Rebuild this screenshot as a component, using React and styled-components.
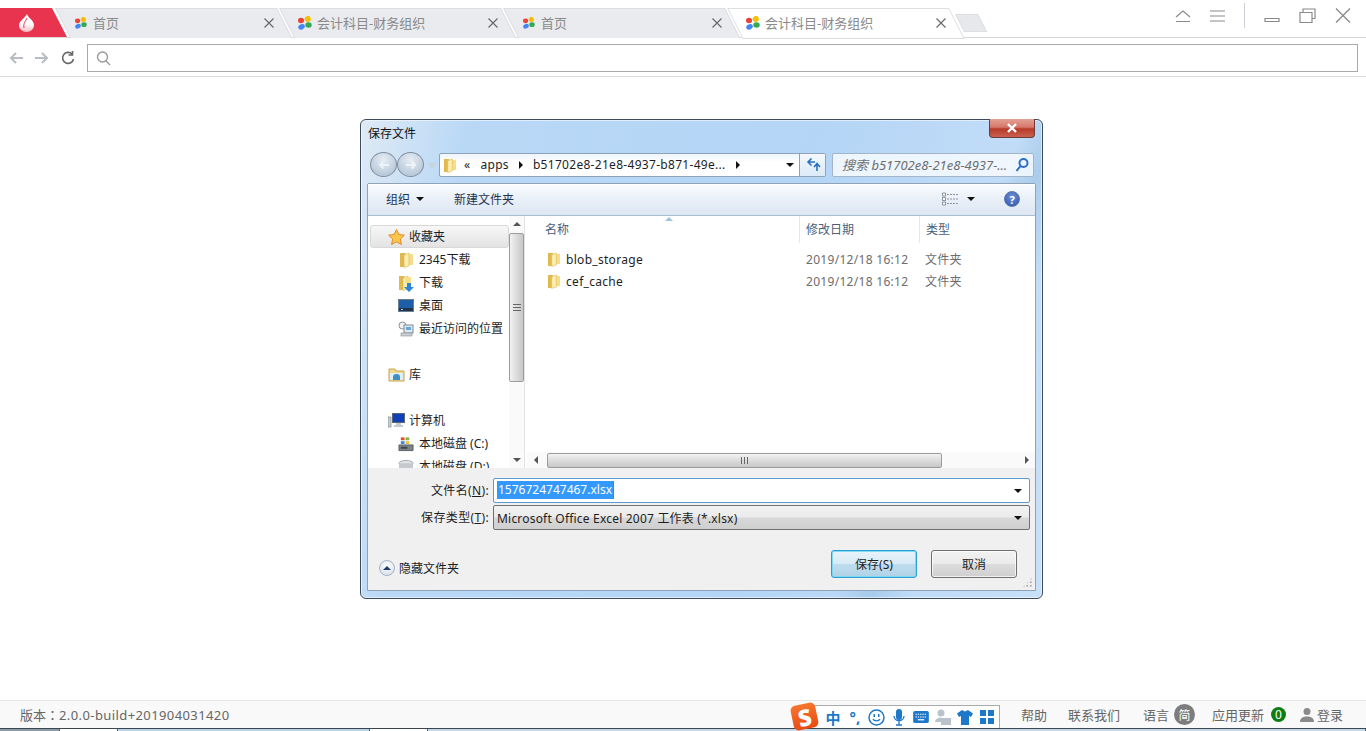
import React from 'react';
import styled, { createGlobalStyle } from 'styled-components';

const GlobalStyle = createGlobalStyle`
  html, body {
    margin: 0;
    height: 100%;
    background: #fff;
    overflow: hidden;
    font-family: "Noto Sans", "Noto Sans CJK SC", sans-serif;
  }
  * { box-sizing: border-box; }
`;

const Page = styled.div`
  display: flex;
  flex-direction: column;
  width: 1366px;
  height: 731px;
`;

/* browser chrome */
const TabBar = styled.div`
  display: flex;
  align-items: flex-start;
  height: 38px;
  padding-top: 8px;
  border-bottom: 1px solid #d8d8d8;
`;

const Brand = styled.div`
  display: flex;
  align-items: center;
  justify-content: center;
  width: 67px;
  height: 29px;
  margin-right: -12px;
  padding-right: 15px;
  background: #e8344e;
  clip-path: polygon(0 0, 52px 0, 67px 100%, 0 100%);
`;

const Tab = styled.div`
  position: relative;
  display: flex;
  align-items: center;
  width: 224px;
  height: 29px;
  padding: 0 5px 0 19px;
  font-size: 13px;
  color: #8a8a8a;

  &::before {
    content: '';
    position: absolute;
    top: 0;
    left: 0;
    width: 220px;
    height: 29px;
    transform-origin: 0 0;
    transform: skewX(27deg);
    background: ${p => (p.$active ? '#fff' : '#e9ebef')};
    border: 1px solid #dcdee2;
    border-bottom: ${p => (p.$active ? '1px solid #dcdee2' : 'none')};
  }

  & > * {
    position: relative;
  }
`;

const FavSlot = styled.span`
  display: flex;
  align-items: center;
  justify-content: center;
  width: 14px;
`;

const TabTitle = styled.span`
  margin-left: 5px;
  flex: 1;
`;

const NewTab = styled.div`
  width: 23px;
  height: 18px;
  margin: 6px 0 0 4px;
  background: #e6e8ec;
  border: 1px solid #dcdee2;
  transform-origin: 0 0;
  transform: skewX(27deg);
`;

const WindowControls = styled.div`
  display: flex;
  align-items: center;
  gap: 19px;
  height: 25px;
  margin: -5px 0 0 auto;
  padding-right: 15px;
`;

const ControlDivider = styled.div`
  width: 1px;
  height: 25px;
  background: #ccd0d4;
`;

const AddressBar = styled.div`
  display: flex;
  align-items: center;
  height: 39px;
  padding: 2px 8px 0 9px;
  border-bottom: 1px solid #dcdcdc;
`;

const NavIcons = styled.div`
  display: flex;
  align-items: center;
  gap: 12px;
  width: 78px;
`;

const UrlInput = styled.div`
  display: flex;
  align-items: center;
  flex: 1;
  height: 28px;
  padding-left: 8px;
  border: 1px solid #aaa;
`;

const Main = styled.div`
  flex: 1;
  padding: 42px 0 0 360px;
`;

/* save dialog */
const Dialog = styled.div`
  display: flex;
  flex-direction: column;
  width: 683px;
  height: 480px;
  border: 1px solid #3b4a5c;
  border-radius: 6px;
  box-shadow: inset 0 0 0 1px rgba(255, 255, 255, 0.55);
  background:
    linear-gradient(112deg, rgba(255,255,255,0) 76%, rgba(150,190,225,0.55) 80%, rgba(255,255,255,0) 85%),
    linear-gradient(100deg, #dfeaf5 0%, #b9d8f6 14%, #b4d5f6 60%, #c8e0f8 100%);
  font-size: 12px;
  color: #1e1e1e;
`;

const TitleRow = styled.div`
  display: flex;
  justify-content: space-between;
  height: 32px;
  padding: 0 7px;
`;

const TitleText = styled.div`
  margin-top: 6px;
  line-height: 16px;
  color: #111;
`;

const CloseButton = styled.div`
  display: flex;
  align-items: center;
  justify-content: center;
  width: 46px;
  height: 19px;
  margin-top: -1px;
  border: 1px solid #6f3a3a;
  border-top: none;
  border-radius: 0 0 4px 4px;
  background: linear-gradient(#e2a195 0%, #d6786a 45%, #b83a2a 55%, #c9604e 100%);
`;

const NavRow = styled.div`
  display: flex;
  align-items: center;
  height: 25px;
  padding: 0 8px 0 9px;
`;

const RoundButton = styled.div`
  display: flex;
  align-items: center;
  justify-content: center;
  width: 27px;
  height: 25px;
  border: 1px solid #7f8fa0;
  border-radius: 50%;
  background: radial-gradient(circle at 50% 30%, #e6edf4 0%, #bccbdb 70%, #a9b9c9 100%);
`;

const SmallCaret = styled.div`
  width: 0;
  height: 0;
  margin: 2px 2px 0 3px;
  border-left: 5px solid transparent;
  border-right: 5px solid transparent;
  border-top: 6px solid #c8d4df;
`;

const Breadcrumb = styled.div`
  display: flex;
  align-items: center;
  width: 387px;
  height: 24px;
  padding-left: 3px;
  border: 1px solid #8fa3b6;
  border-radius: 2px;
  background: linear-gradient(#eef5fc, #fff 40%);
`;

const Crumbs = styled.div`
  display: flex;
  align-items: center;
  flex: 1;
  gap: 10px;
  padding-left: 7px;
  letter-spacing: 0.3px;
`;

const CrumbArrow = styled.i`
  width: 0;
  height: 0;
  border-top: 4px solid transparent;
  border-bottom: 4px solid transparent;
  border-left: 4px solid #111;
`;

const RefreshCell = styled.div`
  display: flex;
  align-items: center;
  justify-content: center;
  width: 26px;
  height: 100%;
  margin-left: 5px;
  border-left: 1px solid #8fa3b6;
  background: linear-gradient(#f4f8fd, #dceafa);
`;

const SearchBox = styled.div`
  display: flex;
  align-items: center;
  justify-content: space-between;
  width: 202px;
  height: 24px;
  margin-left: auto;
  padding: 0 4px 0 9px;
  border: 1px solid #a3b5c6;
  border-radius: 2px;
  background: rgba(255, 255, 255, 0.75);
  font-size: 13px;
  font-style: italic;
  color: #6f6f6f;
  white-space: nowrap;
`;

const Content = styled.div`
  position: relative;
  display: flex;
  flex-direction: column;
  width: 669px;
  height: 408px;
  margin: 6px 0 0 6px;
  border: 1px solid #8ea3b8;
  border-radius: 2px 2px 0 0;
  background: #fff;
`;

const Toolbar = styled.div`
  display: flex;
  align-items: center;
  height: 32px;
  flex-shrink: 0;
  padding: 0 15px 2px 18px;
  border-top: 1px solid #fff;
  border-bottom: 1px solid #a9bdd2;
  background: linear-gradient(#f8fbfe, #e8eff7 50%, #dde7f2);
  color: #1c3553;
`;

const ToolItem = styled.div`
  display: flex;
  align-items: center;
  gap: 6px;
  margin-right: ${p => p.$gap || 0}px;
`;

const ToolRight = styled.div`
  display: flex;
  align-items: center;
  margin-left: auto;
`;

const HelpIcon = styled.div`
  display: flex;
  align-items: center;
  justify-content: center;
  width: 16px;
  height: 16px;
  margin-left: 29px;
  border-radius: 50%;
  border: 1px solid #5a78ad;
  background: radial-gradient(circle at 50% 35%, #6f93d6, #2b50a8);
  color: #fff;
  font-size: 11px;
  font-weight: 700;
`;

const Panes = styled.div`
  display: flex;
  height: 252px;
  flex-shrink: 0;
`;

const NavPane = styled.div`
  width: 141px;
  height: 100%;
  padding: 9px 0 0 2px;
  overflow: hidden;
  flex-shrink: 0;
`;

const NavItem = styled.div`
  display: flex;
  align-items: center;
  gap: ${p => (p.$sub ? 5 : 4)}px;
  height: 23px;
  margin-top: ${p => p.$top || 0}px;
  padding-left: ${p => (p.$sub ? 28 : 18)}px;
  white-space: nowrap;
  color: #1e1e1e;
  ${p =>
    p.$head &&
    `
    border: 1px solid #d8d8d8;
    border-radius: 3px;
    padding-left: 17px;
    background: linear-gradient(#f7f7f7, #e3e3e3);
  `}
`;

const IconSlot = styled.span`
  display: flex;
  align-items: center;
  justify-content: center;
  width: ${p => (p.$sub ? 16 : 17)}px;
  flex-shrink: 0;
`;

const NavLabel = styled.span`
  padding-bottom: 2px;
`;

const VScroll = styled.div`
  display: flex;
  flex-direction: column;
  justify-content: space-between;
  width: 16px;
  height: 100%;
  flex-shrink: 0;
  background: #fafafa;
  border-right: 1px solid #e3e3e3;
`;

const ScrollCell = styled.div`
  display: flex;
  align-items: center;
  justify-content: center;
  flex-shrink: 0;
  width: ${p => p.$w || 15}px;
  height: 16px;
`;

const VThumb = styled.div`
  display: flex;
  align-items: center;
  justify-content: center;
  width: 15px;
  height: 149px;
  margin: 1px 0 auto;
  border: 1px solid #9c9c9c;
  border-radius: 2px;
  background: linear-gradient(90deg, #f2f2f2, #dcdcdc 50%, #c8c8c8);
`;

const ArrowGlyph = styled.i`
  width: 0;
  height: 0;
  ${p => {
    const c = '#555';
    if (p.$dir === 'up') return `border-left:4px solid transparent;border-right:4px solid transparent;border-bottom:4px solid ${c};`;
    if (p.$dir === 'down') return `border-left:4px solid transparent;border-right:4px solid transparent;border-top:4px solid ${c};`;
    if (p.$dir === 'left') return `border-top:4px solid transparent;border-bottom:4px solid transparent;border-right:4px solid ${c};`;
    return `border-top:4px solid transparent;border-bottom:4px solid transparent;border-left:4px solid ${c};`;
  }}
`;

const Grip = styled.div`
  width: ${p => (p.$h ? '7px' : '8px')};
  height: 7px;
  background: ${p =>
    p.$h
      ? 'repeating-linear-gradient(90deg, #666 0 1px, transparent 1px 3px)'
      : 'repeating-linear-gradient(#666 0 1px, transparent 1px 3px)'};
`;

const ListPane = styled.div`
  display: flex;
  flex-direction: column;
  flex: 1;
  min-width: 0;
  margin-left: 2px;
`;

const ListHeader = styled.div`
  position: relative;
  display: flex;
  height: 27px;
  flex-shrink: 0;
  color: #4c607a;
`;

const SortArrow = styled.i`
  position: absolute;
  top: 1px;
  left: 138px;
  width: 0;
  height: 0;
  border-left: 4px solid transparent;
  border-right: 4px solid transparent;
  border-bottom: 4px solid #9cc3dd;
`;

const HeaderCell = styled.div`
  display: flex;
  align-items: center;
  width: ${p => p.$w}px;
  height: 100%;
  padding: 0 0 2px ${p => p.$pad}px;
  border-right: ${p => (p.$last ? 'none' : '1px solid #e3e8ee')};
`;

const Rows = styled.div`
  flex: 1;
  padding-top: 5px;
  letter-spacing: 0.3px;
`;

const FileRow = styled.div`
  display: flex;
  align-items: center;
  height: 22px;
`;

const NameCell = styled.div`
  display: flex;
  align-items: center;
  gap: 5px;
  width: 279px;
  padding-left: 20px;
`;

const MetaCell = styled.div`
  width: ${p => p.$w}px;
  color: #6d6d6d;
`;

const HScroll = styled.div`
  display: flex;
  align-items: center;
  height: 16px;
  flex-shrink: 0;
  background: #fafafa;
`;

const HThumb = styled.div`
  display: flex;
  align-items: center;
  justify-content: center;
  width: 395px;
  height: 15px;
  margin: 0 auto 0 2px;
  border: 1px solid #9c9c9c;
  border-radius: 2px;
  background: linear-gradient(#f2f2f2, #dcdcdc 50%, #c8c8c8);
`;

const FormPanel = styled.div`
  flex: 1;
  padding: 10px 5px 0 0;
  background: #f0f0f0;
`;

const FormRow = styled.div`
  display: flex;
  align-items: center;
  height: 25px;
  margin-bottom: 2px;
`;

const FieldLabel = styled.label`
  width: 125px;
  padding: 0 4px 2px 0;
  text-align: right;
  white-space: nowrap;
  letter-spacing: 0.35px;
`;

const FileInput = styled.div`
  display: flex;
  align-items: center;
  justify-content: space-between;
  width: 537px;
  height: 25px;
  padding: 0 7px 0 3px;
  border: 1px solid ${p => (p.$combo ? '#707070' : '#5b9bd0')};
  border-radius: 2px;
  background: ${p => (p.$combo ? 'linear-gradient(#f2f2f2, #ebebeb 48%, #d8d8d8 52%, #cfcfcf)' : '#fff')};
  letter-spacing: ${p => (p.$combo ? '0.2px' : '0')};
  white-space: nowrap;
`;

const Selected = styled.span`
  margin-bottom: 1px;
  padding: 0 1px;
  background: #3399ff;
  border-right: 1px solid #c86414;
  color: #fff;
  line-height: 18px;
`;

const BlackCaret = styled.i`
  width: 0;
  height: 0;
  margin-left: ${p => p.$left || 0}px;
  margin-right: ${p => p.$right || 0}px;
  border-left: 4px solid transparent;
  border-right: 4px solid transparent;
  border-top: 4px solid #111;
`;

const ActionRow = styled.div`
  display: flex;
  align-items: center;
  margin-top: 20px;
  padding: 0 13px 0 11px;
`;

const HideToggle = styled.div`
  display: flex;
  align-items: center;
  gap: 4px;
  margin-right: auto;
  padding-top: 8px;
`;

const ToggleCircle = styled.div`
  display: flex;
  align-items: center;
  justify-content: center;
  width: 16px;
  height: 16px;
  border: 1px solid #a5b4c5;
  border-radius: 50%;
  background: radial-gradient(circle at 50% 35%, #fff, #d0dbe7);
`;

const ToggleCaret = styled.i`
  width: 0;
  height: 0;
  border-left: 4px solid transparent;
  border-right: 4px solid transparent;
  border-bottom: 4px solid #1e3b72;
`;

const DialogButton = styled.div`
  display: flex;
  align-items: center;
  justify-content: center;
  width: 86px;
  height: 28px;
  margin-left: ${p => (p.$second ? 14 : 0)}px;
  border: 1px solid ${p => (p.$primary ? '#2a9fd0' : '#707070')};
  border-radius: 3px;
  box-shadow: inset 0 0 0 1px ${p => (p.$primary ? 'rgba(120, 215, 245, 0.9)' : 'rgba(255, 255, 255, 0.7)')};
  background: ${p =>
    p.$primary
      ? 'linear-gradient(#e8f3fa, #d8ebf6 48%, #bedcee 52%, #b0d2e6)'
      : 'linear-gradient(#f2f2f2, #ebebeb 48%, #dcdcdc 52%, #cfcfcf)'};
`;

const ResizeDots = styled.div`
  position: absolute;
  right: 2px;
  bottom: 2px;
  width: 11px;
  height: 11px;
  background: radial-gradient(circle, #a8a8a8 0.7px, transparent 1px) 0 0 / 3.5px 3.5px;
  clip-path: polygon(100% 0, 100% 100%, 0 100%);
`;

/* status bar */
const StatusBar = styled.div`
  display: flex;
  align-items: center;
  height: 28px;
  padding: 0 23px 0 20px;
  border-top: 1px solid #e6e6e6;
  background: #f9f9f9;
  font-size: 13px;
  color: #666;
`;

const VersionNumber = styled.span`
  letter-spacing: 0.4px;
`;

const VersionColon = styled.span`
  font-family: "Noto Sans CJK TC", sans-serif;
`;

const ImeBar = styled.div`
  display: flex;
  align-items: center;
  gap: 4px;
  height: 24px;
  margin: 4px 21px 0 auto;
  padding: 0 3px 0 0;
  background: #fff;
  border: 1px solid #aaa;
  border-left: none;
  border-bottom: none;
`;

const ImeLogo = styled.span`
  display: flex;
  align-items: center;
  justify-content: center;
  width: 25px;
  height: 25px;
  margin: -2px 3px 0 -6px;
  border-radius: 5px;
  background: linear-gradient(#f5762f, #ea4a12);
  color: #fff;
  font-size: 23px;
  font-weight: 900;
  transform: rotate(-12deg);
`;

const ImeCell = styled.span`
  display: flex;
  align-items: center;
  justify-content: center;
  width: 18px;
  color: #1d78c9;
  font-size: ${p => p.$size || 14}px;
  font-weight: 700;
`;

const StatusLink = styled.span`
  display: flex;
  align-items: center;
  gap: 3px;
  margin-left: ${p => p.$gap || 0}px;
  white-space: nowrap;
`;

const Badge = styled.span`
  display: inline-flex;
  align-items: center;
  justify-content: center;
  width: ${p => p.$size}px;
  height: ${p => p.$size}px;
  margin-left: ${p => p.$gap}px;
  border-radius: 50%;
  background: ${p => p.$bg};
  color: #fff;
  font-size: 12px;
`;

const Taskbar = styled.div`
  display: flex;
  height: 3px;
  border-top: 1px solid #3c4650;
`;

const TaskItem = styled.div`
  width: ${p => p.$w}px;
  flex: ${p => (p.$w ? 'none' : 1)};
  background: ${p => p.$bg};
  border-right: 1px solid #5a6570;
`;

/* drawings */
const Drop = () => (
  <svg width="15" height="18" viewBox="0 0 15 18">
    <defs>
      <linearGradient id="dropShade" x1="0" y1="0" x2="0" y2="1">
        <stop offset="0.55" stopColor="#fff" />
        <stop offset="1" stopColor="#f7b9c2" />
      </linearGradient>
    </defs>
    <path d="M8 0c1 4 7 6 7 11.500A7.500 6.500 0 0 1 0 11.500C0 7 6 4 8 0z" fill="url(#dropShade)" />
    <path d="M8 4C7 7 4 9 5 14" fill="none" stroke="#e8344e" strokeWidth="1" />
  </svg>
);

const Petals = ({ size = 14 }) => (
  <svg width={size} height={size} viewBox="0 0 14 14">
    <ellipse cx="3" cy="4.500" rx="3" ry="2.800" fill="#ea4335" />
    <ellipse cx="9.800" cy="3" rx="3" ry="3" fill="#fbbc05" transform="rotate(-30 9.800 3)" />
    <ellipse cx="3.500" cy="10.800" rx="3.400" ry="2.600" fill="#4285f4" transform="rotate(-25 3.500 10.800)" />
    <ellipse cx="10.500" cy="9" rx="3.200" ry="2.800" fill="#34a853" />
  </svg>
);

const Times = ({ size = 10, color = '#666' }) => (
  <svg width={size} height={size} viewBox="0 0 10 10">
    <path d="M.5.500l9 9M9.500.500l-9 9" stroke={color} strokeWidth="1.100" fill="none" />
  </svg>
);

const Line = ({ w, h, d, color = '#8a8a8a', sw = 1.2, fill = 'none' }) => (
  <svg width={w} height={h} viewBox={`0 0 ${w} ${h}`}>
    <path d={d} stroke={color} strokeWidth={sw} fill={fill} />
  </svg>
);

const FolderIcon = ({ size = 15 }) => (
  <svg width={size} height={size + 2} viewBox="0 0 15 17">
    <path d="M1 2h5l1 1v13H1z" fill="#e0b94f" />
    <path d="M7 3h7v11H7z" fill="#f6dd8a" />
    <path d="M5 4l5-2v13l-5 1.500z" fill="#fbeeb0" stroke="#d9b552" strokeWidth=".6" />
  </svg>
);

const DownloadFolder = () => (
  <svg width="16" height="18" viewBox="0 0 16 18">
    <path d="M1 2h5l1 1v13H1z" fill="#e0b94f" />
    <path d="M5 4l5-2v13l-5 1.500z" fill="#fbeeb0" stroke="#d9b552" strokeWidth=".6" />
    <path d="M7 3h6v6H7z" fill="#f6dd8a" />
    <path d="M9 9h4v4h3l-5 5-5-5h3z" fill="#2f86d8" />
  </svg>
);

const Star = () => (
  <svg width="17" height="16" viewBox="0 0 17 16">
    <path d="M8.500.500l2.400 5 5.500.700-4 3.800 1 5.500-4.900-2.700-4.900 2.700 1-5.500-4-3.800 5.500-.700z" fill="#fbc64a" stroke="#e08a2a" strokeWidth="1" />
  </svg>
);

const Desktop = () => (
  <svg width="16" height="14" viewBox="0 0 16 14">
    <rect x=".5" y=".5" width="15" height="12" fill="#1c5ea8" stroke="#6b7f92" />
    <rect x="1" y="9" width="14" height="3" fill="#22334a" />
    <rect x="3" y="10" width="2" height="1" fill="#8fd0ff" />
  </svg>
);

const Recent = () => (
  <svg width="16" height="16" viewBox="0 0 16 16">
    <circle cx="4.500" cy="4.500" r="3.500" fill="#f2f2f2" stroke="#8a9096" />
    <rect x="6" y="4" width="9" height="8" fill="#dfe8ee" stroke="#7e8a94" />
    <rect x="8" y="6" width="5" height="3" fill="#65a8d8" />
    <rect x="3" y="12" width="11" height="3" fill="#c9ced3" stroke="#8a9096" strokeWidth=".6" />
  </svg>
);

const Library = () => (
  <svg width="17" height="15" viewBox="0 0 17 15">
    <path d="M1 2h6l1 2h8v10H1z" fill="#f1d98c" stroke="#c9a64e" />
    <path d="M2 6h13v7H2z" fill="#dfeef7" />
    <path d="M5 13v-3a3.500 3 0 0 1 7 0v3z" fill="#3f8fc4" />
  </svg>
);

const Computer = () => (
  <svg width="17" height="15" viewBox="0 0 17 15">
    <rect x="0" y="4" width="3" height="10" fill="#c9cfd4" stroke="#6f7a84" strokeWidth=".6" />
    <rect x="4.500" y=".5" width="12" height="9" fill="#1040b8" stroke="#5b6670" />
    <path d="M8 10h5v2h2v2H6v-2h2z" fill="#c4cacf" />
  </svg>
);

const Disk = () => (
  <svg width="17" height="16" viewBox="0 0 17 16">
    <path d="M1 9h15v6H1z" fill="#7b8288" stroke="#5b6066" />
    <rect x="3" y="11" width="7" height="2" fill="#3f4549" />
    <rect x="3" y="1" width="4" height="3" fill="#e2502e" />
    <rect x="8" y="1" width="4" height="3" fill="#7fb83c" />
    <rect x="3" y="5" width="4" height="3" fill="#3c8ad8" />
    <rect x="8" y="5" width="4" height="3" fill="#f0c23a" />
  </svg>
);

const DiskD = () => (
  <svg width="17" height="16" viewBox="0 0 17 16">
    <ellipse cx="8.500" cy="4" rx="7.500" ry="3" fill="#dfe3e6" stroke="#a4a9ad" />
    <path d="M1 4v9h15V4" fill="#c5c9cd" />
  </svg>
);

const ViewIcon = () => (
  <svg width="16" height="14" viewBox="0 0 16 14">
    <path d="M.5 1h3v3h-3zM.5 5.500h3v3h-3zM.5 10h3v3h-3z" fill="#fff" stroke="#6c7a8a" strokeWidth=".8" />
    <path d="M5 2.500h11M5 7h11M5 11.500h11" stroke="#8a96a4" strokeDasharray="2 1" />
  </svg>
);

const UserIcon = () => (
  <svg width="14" height="15" viewBox="0 0 14 15">
    <circle cx="7" cy="4.500" r="3.500" fill="#8a8a8a" />
    <path d="M0 15c0-4 3-5.500 7-5.500S14 11 14 15z" fill="#8a8a8a" />
  </svg>
);

const navItems = [
  { icon: <FolderIcon />, label: '2345下载', sub: true },
  { icon: <DownloadFolder />, label: '下载', sub: true },
  { icon: <Desktop />, label: '桌面', sub: true },
  { icon: <Recent />, label: '最近访问的位置', sub: true },
  { icon: <Library />, label: '库', top: 23 },
  { icon: <Computer />, label: '计算机', top: 23 },
  { icon: <Disk />, label: '本地磁盘 (C:)', sub: true },
  { icon: <DiskD />, label: '本地磁盘 (D:)', sub: true },
];

const tabs = [
  { title: '首页', icon: 12 },
  { title: '会计科目-财务组织', icon: 14 },
  { title: '首页', icon: 12 },
  { title: '会计科目-财务组织', icon: 14, active: true },
];

const files = ['blob_storage', 'cef_cache'];

const taskItems = [
  { w: 60, bg: '#8c9aa6' },
  { w: 58, bg: '#fff' },
  { w: 252, bg: '#b8d2e8' },
  { w: 58, bg: '#fff' },
  { bg: '#c4d8e8' },
];

function App() {
  return (
    <Page>
      <GlobalStyle />
      <TabBar>
        <Brand>
          <Drop />
        </Brand>
        {tabs.map((tab, idx) => (
          <Tab key={idx} $active={tab.active}>
            <FavSlot>
              <Petals size={tab.icon} />
            </FavSlot>
            <TabTitle>{tab.title}</TabTitle>
            <Times />
          </Tab>
        ))}
        <NewTab />
        <WindowControls>
          <Line w={16} h={12} d="M1 7l7-6 7 6M1 11.500h14" />
          <Line w={15} h={12} d="M0 1h15M0 6h15M0 11h15" />
          <ControlDivider />
          <Line w={16} h={25} d="M1 15.500h14v3H1z" />
          <Line w={17} h={15} d="M1 4.500h12v10H1zM4 4V1h12v9.500h-3" />
          <Line w={16} h={15} d="M1 .5l14 14M15 .5l-14 14" sw={1.3} />
        </WindowControls>
      </TabBar>
      <AddressBar>
        <NavIcons>
          <Line w={14} h={12} d="M14 6H2M7 1L2 6l5 5" color="#b8bcc4" sw={2} />
          <Line w={14} h={12} d="M0 6h12M7 1l5 5-5 5" color="#b8bcc4" sw={2} />
          <Line w={14} h={14} d="M12.500 8a5.500 5.500 0 1 1-1.500-5M11.500 0v4h-4" color="#666" sw={1.6} />
        </NavIcons>
        <UrlInput>
          <Line w={15} h={15} d="M6.500 1a5 5 0 1 1 0 10 5 5 0 0 1 0-10zM10 10l4 4" color="#999" sw={1.4} />
        </UrlInput>
      </AddressBar>
      <Main>
        <Dialog>
          <TitleRow>
            <TitleText>保存文件</TitleText>
            <CloseButton>
              <Line w={12} h={10} d="M2 1l8 8M10 1L2 9" color="#fff" sw={2.4} />
            </CloseButton>
          </TitleRow>
          <NavRow>
            <RoundButton>
              <Line w={12} h={10} d="M11 5H2M5.500 1.500L2 5l3.500 3.500" color="#eef3f8" sw={2} />
            </RoundButton>
            <RoundButton>
              <Line w={12} h={10} d="M1 5h9M6.500 1.500L10 5 6.500 8.500" color="#eef3f8" sw={2} />
            </RoundButton>
            <SmallCaret />
            <Breadcrumb>
              <FolderIcon size={14} />
              <Crumbs>
                <span>«</span>
                <span>apps</span>
                <CrumbArrow />
                <span>b51702e8-21e8-4937-b871-49e...</span>
                <CrumbArrow />
              </Crumbs>
              <BlackCaret />
              <RefreshCell>
                <Line w={16} h={15} d="M10 5H3.500M6.500 1.500L3 5l3.500 3.500M12 14V7M9 10l3-3.500 3 3.500" color="#2a6fc4" sw={1.6} />
              </RefreshCell>
            </Breadcrumb>
            <SearchBox>
              <span>搜索 b51702e8-21e8-4937-...</span>
              <Line w={14} h={14} d="M8.500 1a4 4 0 1 1 0 8 4 4 0 0 1 0-8zM5.500 8l-4 5" color="#2a6fc4" sw={2} />
            </SearchBox>
          </NavRow>
          <Content>
            <Toolbar>
              <ToolItem $gap={29}>
                组织
                <BlackCaret />
              </ToolItem>
              <ToolItem style={{ paddingLeft: 1 }}>新建文件夹</ToolItem>
              <ToolRight>
                <ToolItem>
                  <ViewIcon />
                  <BlackCaret $left={3} />
                </ToolItem>
                <HelpIcon>?</HelpIcon>
              </ToolRight>
            </Toolbar>
            <Panes>
              <NavPane>
                <NavItem $head>
                  <IconSlot>
                    <Star />
                  </IconSlot>
                  <NavLabel>收藏夹</NavLabel>
                </NavItem>
                {navItems.map(item => (
                  <NavItem key={item.label} $sub={item.sub} $top={item.top}>
                    <IconSlot $sub={item.sub}>{item.icon}</IconSlot>
                    <NavLabel>{item.label}</NavLabel>
                  </NavItem>
                ))}
              </NavPane>
              <VScroll>
                <ScrollCell>
                  <ArrowGlyph $dir="up" />
                </ScrollCell>
                <VThumb>
                  <Grip />
                </VThumb>
                <ScrollCell>
                  <ArrowGlyph $dir="down" />
                </ScrollCell>
              </VScroll>
              <ListPane>
                <ListHeader>
                  <SortArrow />
                  <HeaderCell $w={273} $pad={18}>名称</HeaderCell>
                  <HeaderCell $w={120} $pad={6}>修改日期</HeaderCell>
                  <HeaderCell $w={100} $pad={6} $last>类型</HeaderCell>
                </ListHeader>
                <Rows>
                  {files.map(name => (
                    <FileRow key={name}>
                      <NameCell>
                        <FolderIcon size={14} />
                        {name}
                      </NameCell>
                      <MetaCell $w={119}>2019/12/18 16:12</MetaCell>
                      <MetaCell $w={90}>文件夹</MetaCell>
                    </FileRow>
                  ))}
                </Rows>
                <HScroll>
                  <ScrollCell $w={18}>
                    <ArrowGlyph $dir="left" />
                  </ScrollCell>
                  <HThumb>
                    <Grip $h />
                  </HThumb>
                  <ScrollCell $w={16}>
                    <ArrowGlyph $dir="right" />
                  </ScrollCell>
                </HScroll>
              </ListPane>
            </Panes>
            <FormPanel>
              <FormRow>
                <FieldLabel>文件名(<u>N</u>):</FieldLabel>
                <FileInput>
                  <Selected>1576724747467.xlsx</Selected>
                  <BlackCaret />
                </FileInput>
              </FormRow>
              <FormRow>
                <FieldLabel>保存类型(<u>T</u>):</FieldLabel>
                <FileInput $combo>
                  <span>Microsoft Office Excel 2007 工作表 (*.xlsx)</span>
                  <BlackCaret />
                </FileInput>
              </FormRow>
              <ActionRow>
                <HideToggle>
                  <ToggleCircle>
                    <ToggleCaret />
                  </ToggleCircle>
                  隐藏文件夹
                </HideToggle>
                <DialogButton $primary>保存(S)</DialogButton>
                <DialogButton $second>取消</DialogButton>
              </ActionRow>
            </FormPanel>
            <ResizeDots />
          </Content>
        </Dialog>
      </Main>
      <StatusBar>
        <span>
          版本<VersionColon>：</VersionColon>
          <VersionNumber>2.0.0-build+201904031420</VersionNumber>
        </span>
        <ImeBar>
          <ImeLogo>S</ImeLogo>
          <ImeCell $size={15}>中</ImeCell>
          <ImeCell $size={15}>°,</ImeCell>
          <ImeCell>
            <svg width="17" height="17" viewBox="0 0 17 17">
              <circle cx="8.500" cy="8.500" r="7.500" fill="none" stroke="#1d78c9" strokeWidth="1.500" />
              <path d="M5 10c1 2.500 6 2.500 7 0" fill="none" stroke="#1d78c9" strokeWidth="1.300" />
              <rect x="5.500" y="5" width="1.500" height="3" fill="#1d78c9" />
              <rect x="10" y="5" width="1.500" height="3" fill="#1d78c9" />
            </svg>
          </ImeCell>
          <ImeCell>
            <svg width="12" height="17" viewBox="0 0 12 17">
              <rect x="3" y="0" width="6" height="11" rx="3" fill="#1d78c9" />
              <path d="M1 7c0 6 10 6 10 0M6 12v4M3 16h6" fill="none" stroke="#1d78c9" strokeWidth="1.300" />
            </svg>
          </ImeCell>
          <ImeCell>
            <svg width="16" height="12" viewBox="0 0 17 13">
              <rect x="0" y="0" width="17" height="13" rx="2" fill="#1d78c9" />
              <path d="M2.500 3.500h12M2.500 6.500h12" stroke="#fff" strokeWidth="1.300" strokeDasharray="1.500 1" />
              <path d="M5 9.500h7" stroke="#fff" strokeWidth="1.300" />
            </svg>
          </ImeCell>
          <ImeCell>
            <svg width="18" height="17" viewBox="0 0 18 17">
              <circle cx="7" cy="4" r="3.500" fill="#b9c3cc" />
              <path d="M1 13c0-3 3-4.500 6-4.500V13z" fill="#b9c3cc" />
              <rect x="7" y="9" width="10" height="7" fill="#b9c3cc" />
            </svg>
          </ImeCell>
          <ImeCell>
            <svg width="16" height="15" viewBox="0 0 16 15">
              <path d="M5 0l3 1.500L11 0l5 3.500-2 3.500-2-1v9H4V6L2 7 0 3.500z" fill="#1d78c9" />
            </svg>
          </ImeCell>
          <ImeCell>
            <svg width="14" height="14" viewBox="0 0 15 15">
              <path d="M0 0h6.500v6.500H0zM8.500 0H15v6.500H8.500zM0 8.500h6.500V15H0zM8.500 8.500H15V15H8.500z" fill="#1d78c9" />
            </svg>
          </ImeCell>
        </ImeBar>
        <StatusLink>帮助</StatusLink>
        <StatusLink $gap={21}>联系我们</StatusLink>
        <StatusLink $gap={23}>语言</StatusLink>
        <Badge $size={21} $bg="#7d7d7d" $gap={5}>简</Badge>
        <StatusLink $gap={17}>应用更新</StatusLink>
        <Badge $size={15} $bg="#0d7d12" $gap={7}>0</Badge>
        <StatusLink $gap={14}>
          <UserIcon />
          登录
        </StatusLink>
      </StatusBar>
      <Taskbar>
        {taskItems.map((item, idx) => (
          <TaskItem key={idx} $w={item.w} $bg={item.bg} />
        ))}
      </Taskbar>
    </Page>
  );
}

export default App;
